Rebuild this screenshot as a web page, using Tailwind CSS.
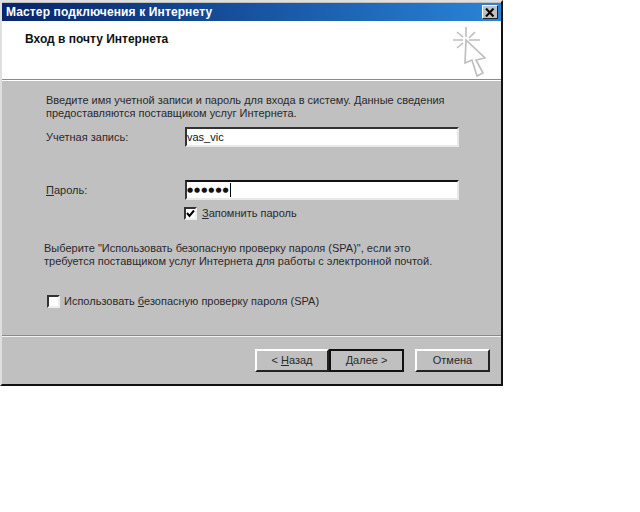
<!DOCTYPE html>
<html lang="ru">
<head>
  <meta charset="UTF-8">
  <title>Мастер подключения к Интернету</title>
  <script src="https://cdn.jsdelivr.net/npm/@tailwindcss/browser@4"></script>
</head>
<body class="bg-white w-[640px] h-[512px] overflow-hidden font-['Liberation_Sans',sans-serif] text-[11px] leading-[13px] text-[#2a2a2a]">

  <!-- dialog window -->
  <div class="w-[503px] h-[386px] bg-[#c0c0c0] border-t-2 border-l-2 border-t-[#dfdfdf] border-l-[#dfdfdf] border-r-2 border-b-2 border-r-[#111] border-b-[#111] flex flex-col">

    <!-- title bar -->
    <div class="mt-px h-[18px] flex items-center justify-between pl-[4px] pr-[3px] bg-gradient-to-r from-[#0a246a] to-[#2a84d8]">
      <span class="text-white font-bold text-[12px] tracking-[0.12px]">Мастер подключения к Интернету</span>
      <div class="w-4 h-[14px] bg-[#c0c0c0] border border-t-white border-l-white border-r-[#222] border-b-[#222] flex items-center justify-center">
        <svg width="10" height="9" viewBox="0 0 10 9"><path d="M1 0.5 L8.5 8.5 M8.5 0.5 L1 8.5" stroke="#000" stroke-width="2" fill="none"/></svg>
      </div>
    </div>

    <!-- header -->
    <div class="h-[59px] bg-white flex justify-between border-b border-b-[#8a8a8a]">
      <h1 class="ml-[23px] mt-[12px] font-bold text-[12px] text-[#111]">Вход в почту Интернета</h1>
      <svg class="mr-[15px] mt-[4px]" width="36" height="53" viewBox="0 0 36 53" fill="none" stroke="#bdbdbd">
        <path stroke-width="1.6" d="M16 2 V12 M3 15 H13 M19 15 H30 M7 7 L13 12 M25 7 L19 13 M7 23 L13 18"/>
        <path stroke-width="1.6" fill="#fff" d="M16 15 L15 38 L22 35 L27 51 L33 48 L26 35 L35 33 Z"/>
      </svg>
    </div>
    <div class="h-px bg-white"></div>

    <!-- form -->
    <div class="flex-1 relative">
      <p class="ml-[44px] mt-[13px] w-[420px]">Введите имя учетной записи и пароль для входа в систему. Данные сведения<br>предоставляются поставщиком услуг Интернета.</p>

      <div class="mt-[7px] flex items-center h-[20px]">
        <label class="ml-[44px] w-[139px]">Учетная запись:</label>
        <div class="w-[274px] h-[20px] bg-white border-2 border-t-[#333] border-l-[#333] border-r-[#e8e8e8] border-b-[#e8e8e8] flex items-center text-[#111]">vas_vic</div>
      </div>

      <div class="mt-[33px] flex items-center h-[20px]">
        <label class="ml-[44px] w-[139px]"><span class="underline">П</span>ароль:</label>
        <div class="w-[274px] h-[20px] bg-white border-2 border-t-[#111] border-l-[#333] border-r-[#e8e8e8] border-b-[#e8e8e8] flex items-center">
          <span class="text-[#111] text-[7px] tracking-[1px] font-['DejaVu_Sans',sans-serif]">●●●●●●</span>
          <span class="w-px h-[14px] bg-black"></span>
        </div>
      </div>

      <div class="mt-[7px] ml-[182px] flex items-center gap-[5px] h-[13px]">
        <div class="w-[13px] h-[13px] bg-white border-2 border-t-[#333] border-l-[#333] border-r-[#eee] border-b-[#eee] flex items-center justify-center">
          <svg width="9" height="9" viewBox="0 0 9 9"><path d="M1 4 L3.5 7 L8 1.5" stroke="#000" stroke-width="2" fill="none"/></svg>
        </div>
        <span><span class="underline">З</span>апомнить пароль</span>
      </div>

      <p class="ml-[42px] mt-[22px] w-[420px]">Выберите "Использовать безопасную проверку пароля (SPA)", если это<br>требуется поставщиком услуг Интернета для работы с электронной почтой.</p>

      <div class="mt-[27px] ml-[45px] flex items-center gap-[4px] h-[13px]">
        <div class="w-[13px] h-[13px] bg-white border-2 border-t-[#333] border-l-[#333] border-r-[#eee] border-b-[#eee]"></div>
        <span>Использовать <span class="underline">б</span>езопасную проверку пароля (SPA)</span>
      </div>

      <!-- footer -->
      <div class="absolute left-0 right-0 bottom-[47px] h-[2px] bg-[#f2f2f2] border-t border-t-[#8a8a8a]"></div>
      <div class="absolute right-[11px] bottom-[12px] flex">
        <button class="w-[74px] h-[23px] bg-[#c0c0c0] border-2 border-t-white border-l-white border-r-[#222] border-b-[#222]">&lt; <span class="underline">Н</span>азад</button>
        <button class="w-[75px] h-[23px] bg-[#c0c0c0] border-2 border-[#111]"><span class="underline">Д</span>алее &gt;</button>
        <button class="ml-[11px] w-[75px] h-[23px] bg-[#c0c0c0] border-2 border-t-white border-l-white border-r-[#222] border-b-[#222]">Отмена</button>
      </div>
    </div>
  </div>
</body>
</html>
